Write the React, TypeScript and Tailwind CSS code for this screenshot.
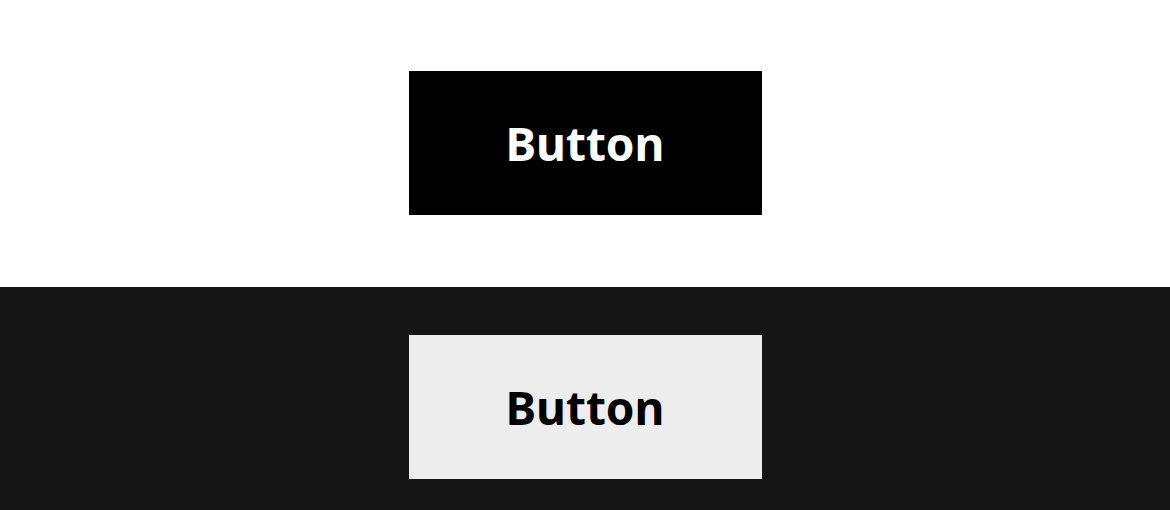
const Button = ({ className }: { className: string }) => {
  return (
    <button
      type="button"
      className={`flex h-[144px] w-[353px] items-center justify-center text-[46px] font-bold leading-none ${className}`}
      style={{ fontFamily: '"Noto Sans", "Open Sans", sans-serif' }}
    >
      Button
    </button>
  );
};

const App = () => {
  return (
    <div className="min-h-[510px] w-full">
      <section className="flex h-[287px] justify-center bg-white pt-[71px]">
        <Button className="bg-black text-white" />
      </section>
      <section className="flex h-[223px] justify-center bg-[#151515] pt-[48px]">
        <Button className="bg-[#ededed] text-black" />
      </section>
    </div>
  );
};

export default App;
